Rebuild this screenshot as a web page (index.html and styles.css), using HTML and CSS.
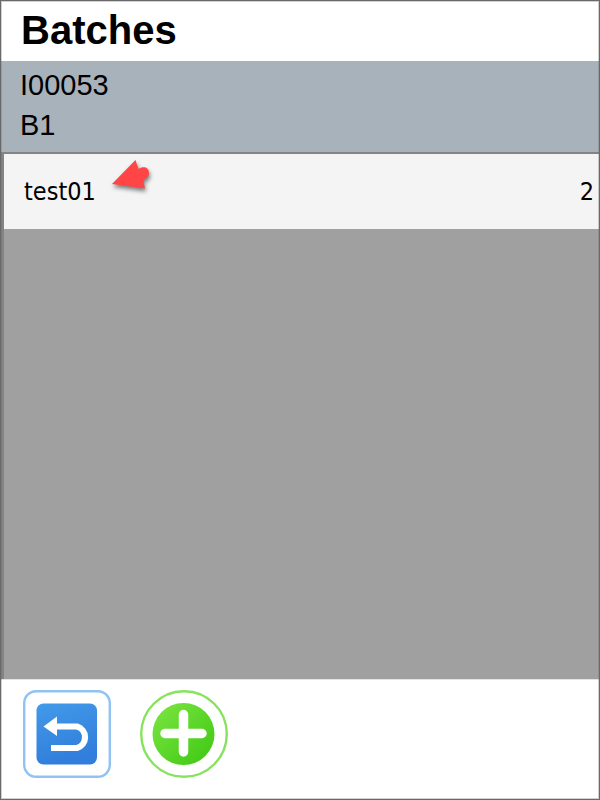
FILE: index.html
```html
<!DOCTYPE html>
<html lang="en">
<head>
<meta charset="utf-8">
<meta name="viewport" content="width=device-width, initial-scale=1">
<title>Batches</title>
<link rel="stylesheet" href="styles.css">
</head>
<body>
<div class="screen">
  <header class="title-bar"><h1 class="title">Batches</h1></header>
  <section class="info">
    <p class="info-line">I00053</p>
    <p class="info-line">B1</p>
  </section>
  <main class="list-area">
    <ul class="list">
      <li class="row">
        <span class="row-name">test01
          <svg class="pointer" width="48" height="40" viewBox="0 0 48 40" aria-hidden="true">
            <path d="M4 26 L27.5 2 L30.5 11 C35 7.500 41 9 41 15 C41 20 36 22 35 21 L37 30.5 Z" fill="#ff4545"/>
          </svg>
        </span>
        <span class="row-count">2</span>
      </li>
    </ul>
  </main>
  <footer class="actions">
    <button class="action" type="button" aria-label="Back">
      <svg width="88" height="88" viewBox="0 0 88 88" aria-hidden="true">
        <defs>
          <linearGradient id="blue" x1="0" y1="0" x2="0.3" y2="1">
            <stop offset="0" stop-color="#429ae9"/>
            <stop offset="1" stop-color="#317edc"/>
          </linearGradient>
        </defs>
        <rect x="1.2" y="1.2" width="85.6" height="85.6" rx="12" fill="#fff" stroke="#8fc3f3" stroke-width="2.4"/>
        <rect x="13.5" y="13.500" width="60.500" height="61" rx="7" fill="url(#blue)"/>
        <path d="M31 36.500 H54 A11.200 11.200 0 0 1 54 58 H28" fill="none" stroke="#fff" stroke-width="6.200"/>
        <path d="M20.500 36.500 L34 26.500 V46 Z" fill="#fff"/>
      </svg>
    </button>
    <button class="action" type="button" aria-label="Add batch">
      <svg width="88" height="88" viewBox="0 0 88 88" aria-hidden="true">
        <defs>
          <linearGradient id="green" x1="0.1" y1="0.1" x2="0.9" y2="0.9">
            <stop offset="0" stop-color="#77e33e"/>
            <stop offset="1" stop-color="#43ca16"/>
          </linearGradient>
        </defs>
        <circle cx="44" cy="44" r="42.8" fill="#fff" stroke="#87e25d" stroke-width="2.400"/>
        <circle cx="43.500" cy="44" r="31" fill="url(#green)"/>
        <path d="M43.500 24.500 V62 M25 43.500 H62" fill="none" stroke="#fff" stroke-width="9.500" stroke-linecap="round"/>
      </svg>
    </button>
  </footer>
</div>
</body>
</html>
```
FILE: styles.css
```css
* {
  box-sizing: border-box;
}

body {
  margin: 0;
  background: #fff;
  color: #000;
  font-family: "Liberation Sans", Arial, sans-serif;
}

.screen {
  display: flex;
  flex-direction: column;
  min-height: 100vh;
  border: 1px solid #696969;
  position: relative;
}

/* Soft inner line of the window frame */
.screen::after {
  content: "";
  position: absolute;
  inset: 0;
  border: 1px solid rgba(105, 105, 105, 0.3);
  pointer-events: none;
}

.title-bar {
  padding: 6px 20px 7px;
}

.title {
  margin: 0;
  font-size: 40px;
  line-height: 47px;
}

.info {
  padding: 4px 19px 7px;
  background: #a8b2bb;
}

.info-line {
  margin: 0;
  font-size: 29px;
  line-height: 40px;
}

.list-area {
  flex: 1;
  border: 2px solid #848484;
  border-width: 2px 0 0 3px;
  background: #a0a0a0;
}

.list {
  margin: 0;
  padding: 0;
  list-style: none;
}

.row {
  display: flex;
  align-items: center;
  justify-content: space-between;
  height: 75px;
  padding: 0 5px 0 20px;
  background: #f4f4f4;
  font-family: Tahoma, "DejaVu Sans Condensed", "DejaVu Sans", sans-serif;
  font-size: 25px;
  line-height: 30px;
}

.row-name {
  position: relative;
}

.pointer {
  position: absolute;
  left: 100%;
  top: -19px;
  margin-left: 12px;
  filter: drop-shadow(1px 3px 2px rgba(0, 0, 0, 0.5));
}

.actions {
  display: flex;
  gap: 28px;
  padding: 10px 22px 21px;
  border-top: 1px solid #e3e3e3;
}

.action {
  width: 89px;
  height: 88px;
  padding: 0;
  border: 0;
  background: none;
  text-align: left;
  cursor: pointer;
}

.action svg {
  display: block;
}
```
